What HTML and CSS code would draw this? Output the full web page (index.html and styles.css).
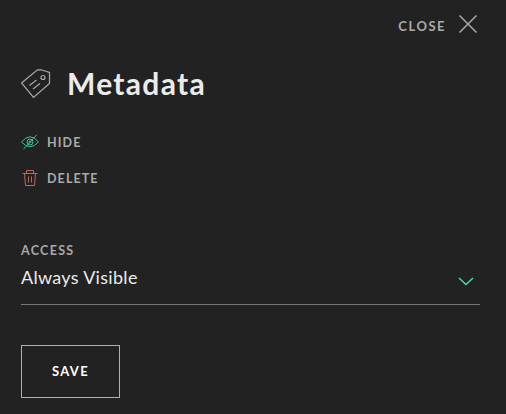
FILE: index.html
```html
<!DOCTYPE html>
<html lang="en">
<head>
<meta charset="utf-8">
<title>Metadata</title>
<link rel="stylesheet" href="styles.css">
</head>
<body>
<main class="panel">
  <button class="close"><span>CLOSE</span>
    <svg width="20" height="20" viewBox="0 0 20 20"><path d="M1.5 1.5 18.5 18.5M18.5 1.5 1.5 18.5"/></svg>
  </button>
  <header class="heading">
    <svg class="tag" width="30" height="30" viewBox="0 0 30 30"><path d="M.5 14 16.5 .8 20 .8 28.5 3.5 28.5 14.5 12.5 28.5Z"/><circle cx="22" cy="8.5" r="2"/><path d="M8.5 16.5 15.5 11M12 20 19 14.5"/></svg>
    <h1>Metadata</h1>
  </header>
  <nav class="actions">
    <button class="action">
      <svg class="eye" width="18" height="16" viewBox="0 0 18 16"><path d="M.5 8Q9-2.5 17.5 8Q9 17.5.5 8ZM2.5 15.2 15.8.8"/><circle cx="9" cy="8" r="3"/><circle cx="9" cy="8" r="1"/></svg>
      <span>HIDE</span>
    </button>
    <button class="action delete">
      <svg class="trash" width="18" height="18" viewBox="0 0 18 18"><path d="M1.5 4.5H16.5M5.5 4.5V1.5H12.5V4.5M3.5 4.5 4.5 16.5H13.5L14.5 4.5M7.5 7.5V13.5M10.5 7.5V13.5"/></svg>
      <span>DELETE</span>
    </button>
  </nav>
  <section class="field">
    <div class="label">ACCESS</div>
    <div class="select"><span>Always Visible</span>
      <svg width="16" height="9" viewBox="0 0 16 9"><path d="M1 1 8 7.5 15 1"/></svg>
    </div>
  </section>
  <button class="save">SAVE</button>
</main>
</body>
</html>
```
FILE: styles.css
```css
* { box-sizing: border-box; }
body {
  margin: 0;
  background: #222;
  color: #ebebeb;
  font-family: Lato, "Liberation Sans", sans-serif;
}
button {
  display: flex;
  align-items: center;
  padding: 0;
  border: 0;
  background: none;
  color: #aaa;
  font: bold 12.5px/18px Lato, sans-serif;
  letter-spacing: 1.1px;
}
svg { flex: none; fill: none; stroke-width: 1.2; }
.panel {
  height: 414px;
  padding: 14px 26px 0 21px;
  display: flex;
  flex-direction: column;
  align-items: flex-start;
}
.close {
  align-self: flex-end;
  height: 20px;
  gap: 12px;
  margin-right: 2px;
  font-size: 13px;
  letter-spacing: 1.5px;
}
.close span { padding-top: 3px; }
.close svg { stroke: #aaa; stroke-width: 1.5; }
.heading {
  display: flex;
  align-items: center;
  height: 40px;
  margin-top: 30px;
  gap: 16px;
}
.tag { stroke: #aaa; }
h1 {
  margin: -2px 0 0;
  font-size: 30px;
  line-height: 40px;
  font-weight: 700;
  letter-spacing: 1.3px;
}
.actions { margin-top: 29px; }
.action { height: 18px; gap: 8px; }
.action span { padding-top: 1px; }
.delete { margin-top: 18px; }
.eye { stroke: #43be8d; stroke-width: 1; }
.trash { stroke: #c36464; stroke-width: 1; }
.field {
  width: 459px;
  margin-top: 54px;
  border-bottom: 1px solid #777;
  height: 64px;
}
.label {
  height: 20px;
  color: #aaa;
  font-size: 12.5px;
  font-weight: 700;
  line-height: 20px;
  letter-spacing: 1.3px;
}
.select {
  display: flex;
  align-items: center;
  justify-content: space-between;
  height: 34px;
  padding-right: 6px;
  font-size: 18px;
  letter-spacing: .3px;
}
.select span { margin-top: -2px; }
.select svg { stroke: #4fdba5; stroke-width: 1.5; margin-top: 6px; }
.save {
  width: 99px;
  height: 53px;
  margin-top: 40px;
  padding-bottom: 1px;
  justify-content: center;
  border: 1px solid #56dda8;
  color: #fff;
  font-size: 13px;
  letter-spacing: 1.3px;
}
```
